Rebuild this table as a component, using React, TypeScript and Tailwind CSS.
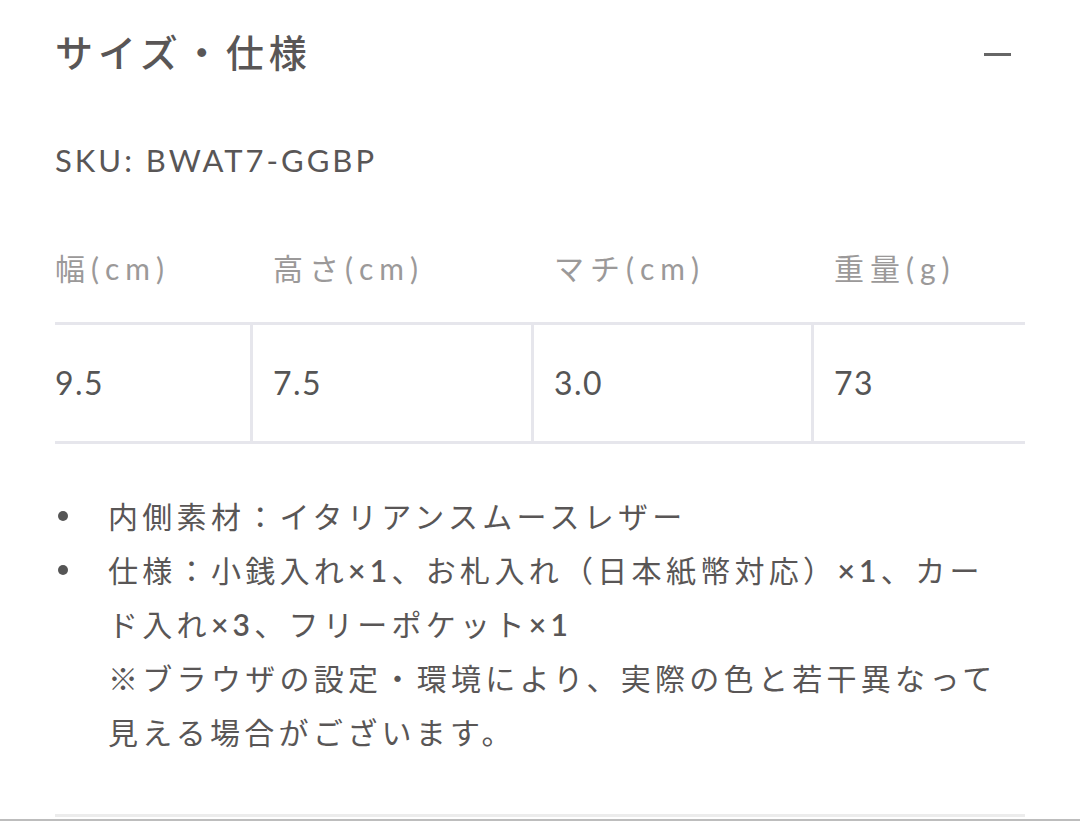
const FONT = {
  fontFamily: '"Lato", "Noto Sans CJK JP", sans-serif',
};

const specs = [
  { label: "幅(cm)", value: "9.5" },
  { label: "高さ(cm)", value: "7.5" },
  { label: "マチ(cm)", value: "3.0" },
  { label: "重量(g)", value: "73" },
];

function Dot() {
  return (
    <span className="w-[53px] shrink-0 flex items-start pt-[22px]">
      <span className="w-[10px] h-[10px] rounded-full bg-[#555] ml-[3px]" />
    </span>
  );
}

export default function App() {
  return (
    <div className="w-[1080px] h-[821px] bg-white overflow-hidden flex flex-col" style={FONT}>
      <div className="px-[55px] flex-1">
        {/* Accordion header */}
        <div className="flex items-center justify-between pt-[26px]">
          <h2 className="text-[38px] leading-[52px] tracking-[5px] font-medium text-[#595656]">
            サイズ・仕様
          </h2>
          <div className="w-[27px] h-[3px] bg-[#666] mr-[14px] mt-[4px]" />
        </div>

        {/* SKU */}
        <p className="mt-[60px] text-[31px] leading-[44px] tracking-[3px] text-[#595656]">
          SKU: BWAT7-GGBP
        </p>

        {/* Size table */}
        <div className="mt-[64px] w-[970px]">
          <div className="grid grid-cols-[195px_281px_280px_214px] border-b-[3px] border-[#e6e6ec]">
            {specs.map((s, i) => (
              <div
                key={s.label}
                className={`h-[76px] text-[30px] leading-[44px] tracking-[6px] text-[#9b9999] ${
                  i === 0 ? "" : "pl-[23px]"
                }`}
              >
                {s.label}
              </div>
            ))}
          </div>
          <div className="grid grid-cols-[195px_281px_280px_214px] border-b-[3px] border-[#e6e6ec]">
            {specs.map((s, i) => (
              <div
                key={s.value}
                className={`h-[116px] flex items-center text-[32px] tracking-[1.5px] text-[#555] ${
                  i === 0 ? "" : "border-l-[3px] border-[#e6e6ec] pl-[20px]"
                }`}
              >
                {s.value}
              </div>
            ))}
          </div>
        </div>

        {/* Notes */}
        <ul className="mt-[45px] pb-[55px] border-b-[3px] border-[#ececec] text-[30px] leading-[54px] tracking-[4.3px] text-[#595656]">
          <li className="flex">
            <Dot />
            <span>内側素材：イタリアンスムースレザー</span>
          </li>
          <li className="flex">
            <Dot />
            <span className="w-[902px]">
              仕様：小銭入れ<b className="font-semibold">×1</b>、お札入れ（日本紙幣対応）<b className="font-semibold">×1</b>、カード入れ<b className="font-semibold">×3</b>、フリーポケット<b className="font-semibold">×1</b>
              <br />
              ※ブラウザの設定・環境により、実際の色と若干異なって見える場合がございます。
            </span>
          </li>
        </ul>
      </div>
      <div className="h-[2px] bg-[#bdbdbd]" />
    </div>
  );
}
